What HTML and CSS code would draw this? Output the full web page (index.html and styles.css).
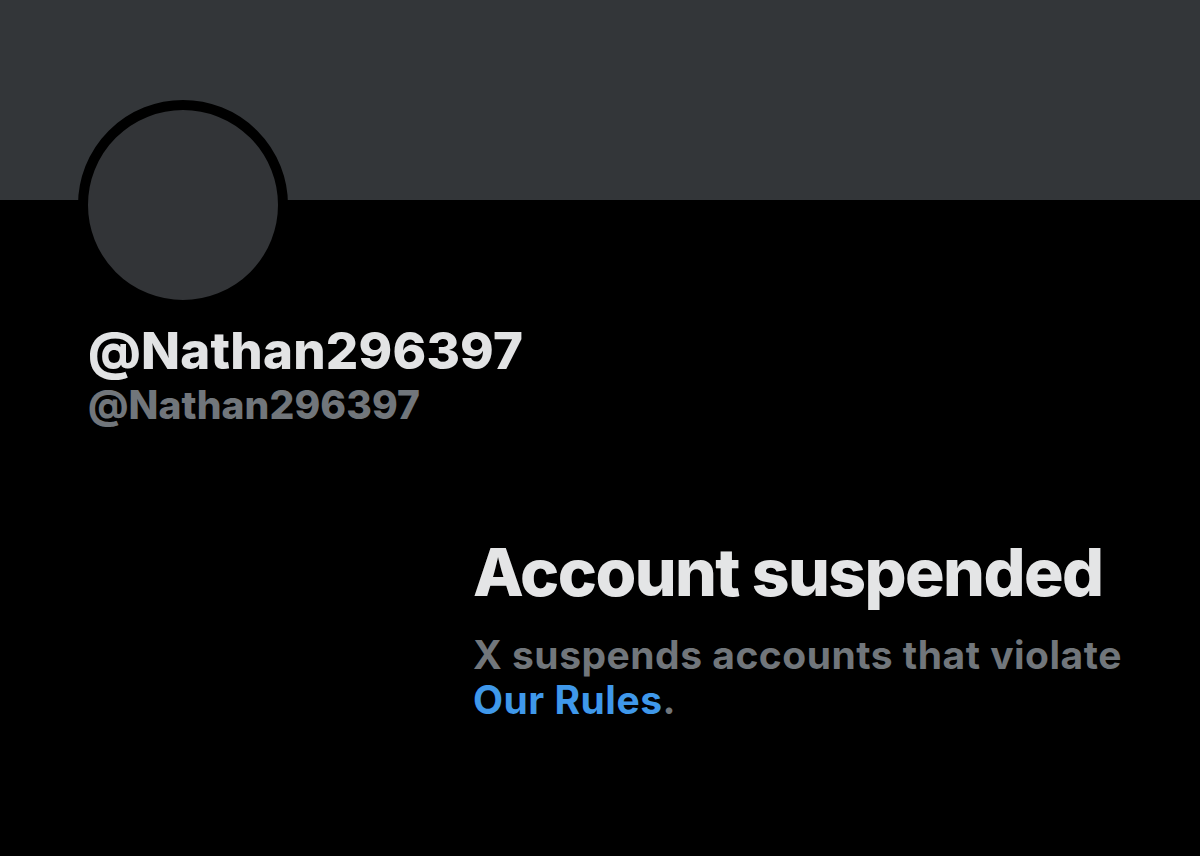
FILE: index.html
```html
<!DOCTYPE html>
<html lang="en">
<head>
<meta charset="utf-8">
<title>Account suspended</title>
<link rel="stylesheet" href="styles.css">
</head>
<body>
<div class="page">
  <div class="banner"></div>
  <div class="profile">
    <div class="avatar"></div>
    <div class="name">@Nathan296397</div>
    <div class="handle">@Nathan296397</div>
  </div>
  <div class="notice">
    <h1 class="notice-title">Account suspended</h1>
    <p class="notice-text">X suspends accounts that violate <a class="notice-link" href="#">Our Rules</a>.</p>
  </div>
</div>
</body>
</html>
```

FILE: styles.css
```css
html, body {
  margin: 0;
  padding: 0;
  background: #000;
}
.page {
  width: 1200px;
  height: 856px;
  background: #000;
  font-family: Inter, "Liberation Sans", Arial, sans-serif;
  overflow: hidden;
}
.banner {
  height: 200px;
  background: #333639;
}
.profile {
  padding-left: 88px;
}
.avatar {
  width: 190px;
  height: 190px;
  margin-top: -100px;
  margin-left: -10px;
  border: 10px solid #000;
  border-radius: 50%;
  background: #323437;
}
.name {
  margin-top: 13px;
  font-size: 51px;
  line-height: 56px;
  font-weight: 800;
  letter-spacing: 0.2px;
  color: #e2e3e4;
}
.handle {
  margin-top: 4px;
  font-size: 39px;
  line-height: 44px;
  font-weight: 800;
  letter-spacing: 0.1px;
  color: #71767b;
}
.notice {
  margin-top: 109px;
  padding-left: 473px;
  width: 665px;
}
.notice-title {
  margin: 0;
  font-size: 66px;
  line-height: 72px;
  font-weight: 800;
  letter-spacing: -1.6px;
  color: #e4e5e6;
}
.notice-text {
  margin: 24px 0 0;
  font-size: 39px;
  line-height: 45px;
  font-weight: 700;
  letter-spacing: 0.5px;
  color: #71767b;
}
.notice-link {
  color: #3f98ea;
  text-decoration: none;
}
```
